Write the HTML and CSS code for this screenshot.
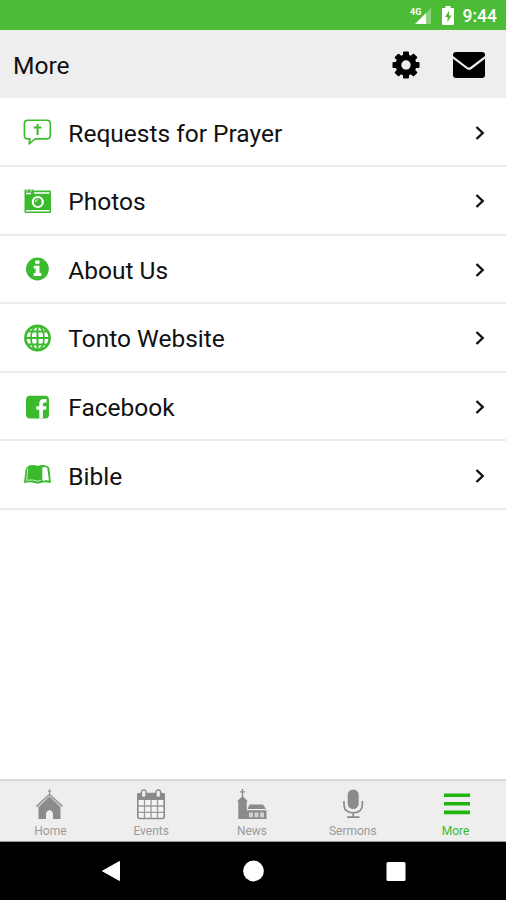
FILE: index.html
```
<!DOCTYPE html>
<html lang="en">
<head>
    <meta charset="UTF-8">
    <title>More</title>
    <meta name="viewport" content="width=device-width, initial-scale=1.0">
    <link rel="stylesheet" href="styles.css">
</head>
<body>
    <div class="status-bar">
        <svg class="signal" width="24" height="20" viewBox="0 0 24 20">
            <path d="M6 19L17 8v11z" fill="#fff"/>
            <path d="M17 8l5-5v16h-5z" fill="#fff" opacity=".35"/>
            <text x="1" y="9.500" class="network">4G</text>
        </svg>
        <svg class="battery" width="12" height="19" viewBox="0 0 12 19">
            <path d="M3.500 0h5v2H11q1 0 1 1v15q0 1-1 1H1q-1 0-1-1V3q0-1 1-1h2.500z" fill="#fff"/>
            <path d="M7 5L3 11h2.500v5l4-6.500H7z" fill="#4cbb35"/>
        </svg>
        <span class="clock">9:44</span>
    </div>

    <header class="header">
        <h1>More</h1>
        <svg class="gear" width="28" height="28" viewBox="0 0 28 28">
            <g fill="#000">
                <rect x="11" y="0.500" width="6" height="27" rx="1"/>
                <rect x="11" y="0.500" width="6" height="27" rx="1" transform="rotate(45 14 14)"/>
                <rect x="11" y="0.500" width="6" height="27" rx="1" transform="rotate(90 14 14)"/>
                <rect x="11" y="0.500" width="6" height="27" rx="1" transform="rotate(135 14 14)"/>
                <circle cx="14" cy="14" r="10.500"/>
            </g>
            <circle cx="14" cy="14" r="4.700" fill="#eee"/>
        </svg>
        <svg class="mail" width="32" height="26" viewBox="0 0 32 26">
            <rect width="32" height="26" rx="3" fill="#000"/>
            <path d="M-1 4.500L14 16q2 1.500 4 0L33 4.500" fill="none" stroke="#eee" stroke-width="2.200"/>
        </svg>
    </header>

    <main class="list">
        <div class="row">
            <svg class="icon" viewBox="0 0 30 30">
                <path d="M5.500 3.300H25q3.300 0 3.300 3.300v12q0 3.300-3.300 3.300H13L7 27l1-5.100H5.500Q2.400 21.900 2.400 18.500V6.600q0-3.300 3.100-3.300z" fill="none" stroke="#3cba2e" stroke-width="1.600" stroke-linejoin="round"/>
                <path d="M15.600 7v11M11.800 10.500h7.600" fill="none" stroke="#3cba2e" stroke-width="2"/>
            </svg>
            <span>Requests for Prayer</span>
            <svg class="chevron" viewBox="0 0 10 16"><path d="M1.500 2L7.700 8l-6.200 6"/></svg>
        </div>
        <div class="row">
            <svg class="icon" viewBox="0 0 30 30">
                <path d="M3 3.500h8.500v1H28q1 0 1 1V26q0 1-1 1H3.500q-1 0-1-1V5z" fill="#3cba2e"/>
                <path d="M4 7.500h5M12 7h15.500M4 24.700h23.500" stroke="#fff" stroke-width="1.400"/>
                <path d="M5 3.500v2M9 3.500v2" stroke="#fff" stroke-width="1"/>
                <circle cx="15.800" cy="16" r="5" fill="#3cba2e" stroke="#fff" stroke-width="2.200"/>
                <path d="M13.500 16q0-2.300 2.300-2.300" fill="none" stroke="#fff" stroke-width="1"/>
            </svg>
            <span>Photos</span>
            <svg class="chevron" viewBox="0 0 10 16"><path d="M1.500 2L7.700 8l-6.200 6"/></svg>
        </div>
        <div class="row">
            <svg class="icon" viewBox="0 0 30 30">
                <circle cx="15.400" cy="15" r="11.400" fill="#3cba2e"/>
                <path d="M13.300 6.400h4.200v3.400h-4.200zM11.700 11.700h5.800v7.400h1.900v2.900h-7.700v-2.900h1.900v-4.500h-1.900z" fill="#fff"/>
            </svg>
            <span>About Us</span>
            <svg class="chevron" viewBox="0 0 10 16"><path d="M1.500 2L7.700 8l-6.200 6"/></svg>
        </div>
        <div class="row">
            <svg class="icon" viewBox="0 0 30 30">
                <g fill="none" stroke="#3cba2e" stroke-width="1.700">
                    <circle cx="15.500" cy="15" r="12.100" stroke-width="2.600"/>
                    <ellipse cx="15.500" cy="15" rx="6.500" ry="12"/>
                    <path d="M15.500 3v24M5.500 8.500h20M3.500 15h24M5.500 21.500h20" stroke-width="2"/>
                </g>
            </svg>
            <span>Tonto Website</span>
            <svg class="chevron" viewBox="0 0 10 16"><path d="M1.500 2L7.700 8l-6.200 6"/></svg>
        </div>
        <div class="row">
            <svg class="icon" viewBox="0 0 30 30">
                <rect x="4" y="3.800" width="23" height="22.800" rx="4" fill="#3cba2e"/>
                <path d="M17.300 26.600v-8.900h-3v-3.500h3v-2.600q0-4.600 4.500-4.600h2.800v3.500h-1.800q-1.900 0-1.900 1.700v2h3.600l-.5 3.500h-3.100v8.900z" fill="#fff"/>
            </svg>
            <span>Facebook</span>
            <svg class="chevron" viewBox="0 0 10 16"><path d="M1.500 2L7.700 8l-6.200 6"/></svg>
        </div>
        <div class="row">
            <svg class="icon" viewBox="0 0 30 30">
                <path d="M5.200 6.500q5-2.700 10.500-.5 5-2.200 10.300.5 1.300.8 1.500 2.500l1.500 14q-6.500-1.500-10.300 0l-3 .8-3-.8q-4-1.500-10.700 0l1.500-13q.3-2.500 2.700-3.500z" fill="#3cba2e"/>
                <path d="M20.300 7.500q3.500-1.200 5 .7l1.700 12.300q-3.500-.8-6 .2l-.7-.7z" fill="#fff"/>
                <path d="M5.800 8.500L4.600 20.300q5.900-1.200 11.400.9l3-1" fill="none" stroke="#fff" stroke-width=".7"/>
            </svg>
            <span>Bible</span>
            <svg class="chevron" viewBox="0 0 10 16"><path d="M1.500 2L7.700 8l-6.200 6"/></svg>
        </div>
    </main>

    <nav class="tabs">
        <div class="tab">
            <svg viewBox="0 0 32 32">
                <path d="M15.500 7.500l11 10.500v12H19v-6q-3.500-6-7 0v6H4.500V18z" fill="#8b8b8b"/>
                <path d="M2.500 17.500l13-12 13 12" fill="none" stroke="#a0a0a0" stroke-width="2"/>
                <path d="M15.500 0v6M13.800 2.500h3.400" stroke="#999" stroke-width="1.200"/>
            </svg>
            <span>Home</span>
        </div>
        <div class="tab">
            <svg viewBox="0 0 32 32">
                <rect x="2.800" y="4.500" width="26.400" height="25" rx="2" fill="#f5f5f5" stroke="#8b8b8b" stroke-width="1.600"/>
                <path d="M2.500 4h27v7h-27z" fill="#8b8b8b"/>
                <path d="M3 17h26M3 23.300h26M9.500 11v18.500M16 11v18.500M22.500 11v18.500" stroke="#999" stroke-width="1.300"/>
                <rect x="6.500" y="1" width="4.500" height="7.500" rx="2" fill="#eee" stroke="#8b8b8b" stroke-width="1.300"/>
                <rect x="21" y="1" width="4.500" height="7.500" rx="2" fill="#eee" stroke="#8b8b8b" stroke-width="1.300"/>
            </svg>
            <span>Events</span>
        </div>
        <div class="tab">
            <svg viewBox="0 0 32 32">
                <path d="M6.500 0v8M4 2.800h5" stroke="#8b8b8b" stroke-width="1.300"/>
                <path d="M6.500 7l5.500 5.500h-1.300V30H2.300V12.500H1z" fill="#8b8b8b"/>
                <path d="M13.500 15.500H27l3 4.500H11.500zM10 21.300h20.500V30H10z" fill="#8b8b8b"/>
                <path d="M13 23.500h4v4.700h-4zM18.500 23.500h4v4.700h-4zM24 23.500h4v4.700h-4z" fill="#d2d2d2"/>
            </svg>
            <span>News</span>
        </div>
        <div class="tab">
            <svg viewBox="0 0 32 32">
                <rect x="10.700" y=".5" width="11" height="19.500" rx="5.500" fill="#8b8b8b"/>
                <path d="M7 12v3.500q0 8.300 9.200 8.300t9.200-8.300V12M16.200 23.500v4.500M10 28.200h12.500" fill="none" stroke="#8b8b8b" stroke-width="1.700"/>
            </svg>
            <span>Sermons</span>
        </div>
        <div class="tab active">
            <svg viewBox="0 0 32 32">
                <path d="M4 6.200h26M4 14.800h26M4 23.400h26" stroke="#22b40e" stroke-width="3.600"/>
            </svg>
            <span>More</span>
        </div>
    </nav>

    <div class="nav-bar">
        <svg width="22" height="22" viewBox="0 0 22 22"><path d="M19.500 1.500v19L2.500 11z" fill="#fff" stroke="#fff" stroke-linejoin="round"/></svg>
        <svg width="22" height="22" viewBox="0 0 22 22"><circle cx="10.500" cy="11" r="10.400" fill="#fff"/></svg>
        <svg width="22" height="22" viewBox="0 0 22 22"><rect x="1.500" y="2" width="19" height="19" rx="1.500" fill="#fff"/></svg>
    </div>
</body>
</html>
```
FILE: styles.css
```
body {
    margin: 0;
    height: 900px;
    display: flex;
    flex-direction: column;
    overflow: hidden;
    background: #fff;
    color: #111;
    font-family: Roboto, Arial, sans-serif;
}
svg {
    display: block;
    flex-shrink: 0;
}
.status-bar {
    height: 30px;
    flex-shrink: 0;
    box-sizing: border-box;
    display: flex;
    align-items: center;
    justify-content: flex-end;
    padding-right: 9px;
    background: #4cbb35;
    color: #fff;
}
.signal {
    margin: 0 9px 0 0;
}
.network {
    font-size: 9px;
    font-weight: 700;
    fill: #fff;
}
.battery {
    margin-right: 9px;
}
.clock {
    font-size: 17.5px;
    font-weight: 500;
    line-height: 30px;
    padding-top: 2px;
}
.header {
    height: 68px;
    flex-shrink: 0;
    box-sizing: border-box;
    display: flex;
    align-items: center;
    padding: 0 21px 0 13px;
    background: #eee;
}
.header h1 {
    flex: 1;
    margin: 0;
    padding-top: 2px;
    font-size: 24.6px;
    font-weight: 400;
}
.gear {
    margin: 1px 33.5px 0 0;
}
.mail {
    margin-top: 1px;
}
.list {
    flex: 1;
    padding-top: 0.4px;
}
.row {
    height: 68.6px;
    box-sizing: border-box;
    display: flex;
    align-items: center;
    padding: 0 21px 0 22px;
    border-bottom: 2px solid #ebebeb;
    font-size: 24.5px;
}
.row span {
    flex: 1;
    padding: 3px 0 0 16.3px;
}
.icon {
    width: 30px;
    height: 30px;
    margin-top: 1px;
}
.chevron {
    width: 10px;
    height: 16px;
    margin-top: 2px;
    fill: none;
    stroke: #111;
    stroke-width: 2.4;
}
.tabs {
    height: 63px;
    flex-shrink: 0;
    box-sizing: border-box;
    display: flex;
    border-top: 2px solid #d8d8d8;
    border-bottom: 1px solid #999;
    background: #eee;
    color: #999;
}
.tab {
    flex: 1;
    display: flex;
    flex-direction: column;
    align-items: center;
    padding-top: 8px;
    font-size: 12px;
    line-height: 14px;
}
.tab svg {
    width: 32px;
    height: 32px;
    margin-bottom: 3px;
}
.tab.active {
    padding-left: 2px;
    color: #3cba2e;
}
.nav-bar {
    height: 58px;
    flex-shrink: 0;
    display: flex;
    align-items: center;
    justify-content: space-between;
    box-sizing: border-box;
    padding: 0 99px 0 100px;
    background: #000;
}
```
